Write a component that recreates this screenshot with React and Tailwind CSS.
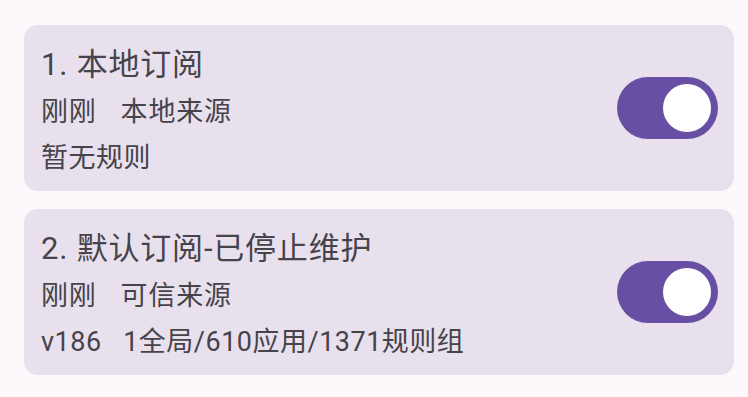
import { useState } from "react";

const font = { fontFamily: 'Roboto, "Noto Sans CJK SC", "Noto Sans", sans-serif' };

const subscriptions = [
  { id: 1, title: "1. 本地订阅", meta: ["刚刚", "本地来源"], rules: "暂无规则" },
  {
    id: 2,
    title: "2. 默认订阅-已停止维护",
    meta: ["刚刚", "可信来源"],
    rules: "v186\u00a0\u00a0 1全局/610应用/1371规则组",
  },
];

const Toggle = ({ on, onChange }) => (
  <button
    type="button"
    onClick={onChange}
    className={
      "relative flex h-[62px] w-[101px] shrink-0 items-center rounded-full px-[7px] " +
      (on ? "justify-end bg-[#6750a4]" : "justify-start bg-[#e7e0ec] border-2 border-[#79747e]")
    }
  >
    <span className={on ? "h-[48px] w-[48px] rounded-full bg-white" : "h-[30px] w-[30px] rounded-full bg-[#79747e]"} />
  </button>
);

const SubscriptionCard = ({ item }) => {
  const [on, setOn] = useState(true);
  return (
    <div className="flex items-center rounded-[14px] bg-[#e8e0ec] pl-[17px] pr-[16px] py-[10px]">
      <div className="flex min-w-0 flex-1 flex-col pt-[6px] text-[#46434b] tracking-[0.8px]">
        <div className="text-[31px] leading-[48px]">{item.title}</div>
        <div className="flex gap-[24px] text-[27px] leading-[46px]">
          {item.meta.map((m) => (
            <span key={m}>{m}</span>
          ))}
        </div>
        <div className="text-[27px] leading-[46px] tracking-[0.5px] whitespace-pre">{item.rules}</div>
      </div>
      <Toggle on={on} onChange={() => setOn(!on)} />
    </div>
  );
};

export default function App() {
  return (
    <div className="h-[397px] w-[748px] overflow-hidden bg-[#fcf8fc] pl-[24px] pr-[14px] pt-[25px]" style={font}>
      <div className="flex flex-col gap-[18px]">
        {subscriptions.map((item) => (
          <SubscriptionCard key={item.id} item={item} />
        ))}
      </div>
    </div>
  );
}
